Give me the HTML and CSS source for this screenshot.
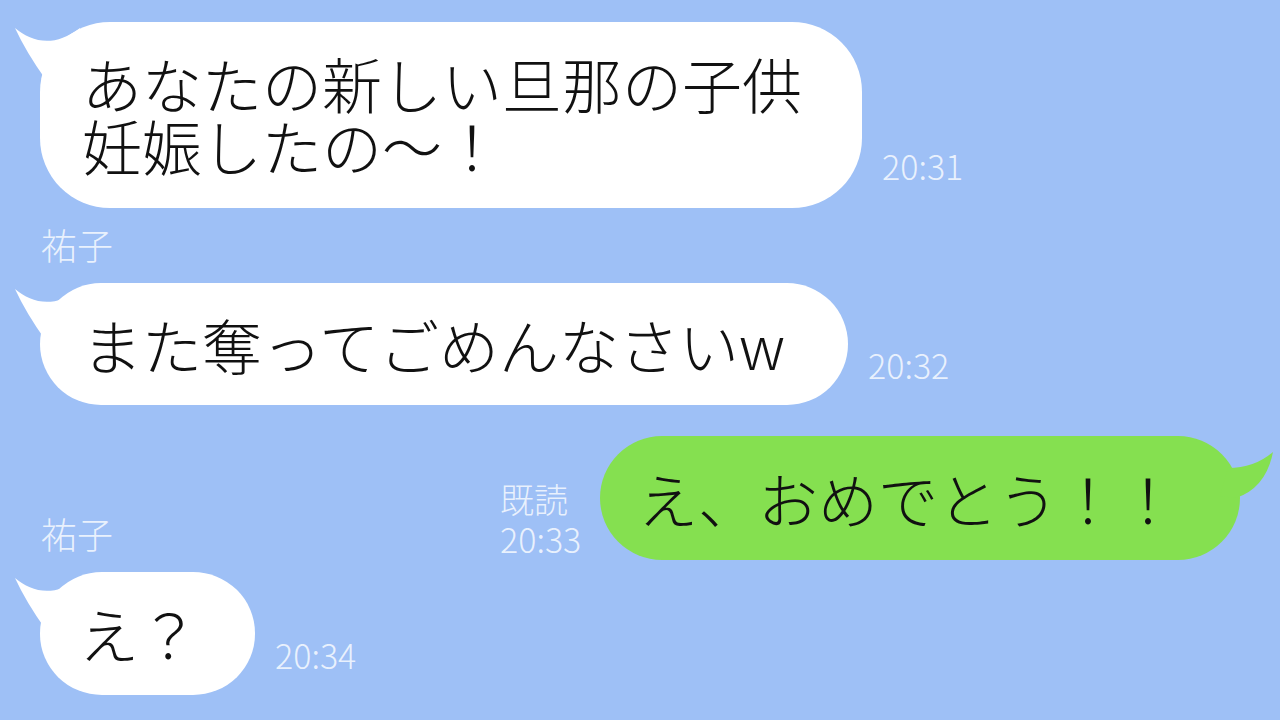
FILE: index.html
```html
<!DOCTYPE html>
<html lang="ja">
<head>
    <meta charset="UTF-8">
    <meta name="viewport" content="width=device-width, initial-scale=1.0">
    <title>トーク</title>
    <link rel="stylesheet" href="styles.css">
</head>
<body>
    <main class="chat">

      <div class="fila izq">
        <div class="burbuja blanca b1">
          <svg class="cola" viewBox="0 0 80 70" width="80" height="70"><path d="M5,6 C22,20 44,26 70,6 L90,50 L36,58 Q16,30 5,6 Z"/></svg>
          <span class="linea">あなたの新しい旦那の子供</span>
          <span class="linea">妊娠したの～！</span>
        </div>
        <span class="hora h1">20:31</span>
      </div>

      <p class="nombre n1">祐子</p>

      <div class="fila izq">
        <div class="burbuja blanca b2">
          <svg class="cola" viewBox="0 0 80 70" width="80" height="70"><path d="M5,6 C22,20 44,26 70,6 L90,50 L36,58 Q16,30 5,6 Z"/></svg>
          <span class="linea">また奪ってごめんなさいw</span>
        </div>
        <span class="hora h2">20:32</span>
      </div>

      <div class="fila der">
        <div class="leido">
          <span>既読</span>
          <span>20:33</span>
        </div>
        <div class="burbuja verde b3">
          <svg class="cola" viewBox="0 0 80 70" width="80" height="70"><path d="M73,16 Q55,32 28,32 L20,60 L36,62 Q66,52 73,16 Z"/></svg>
          <span class="linea">え、おめでとう！！</span>
        </div>
      </div>

      <p class="nombre n2">祐子</p>

      <div class="fila izq">
        <div class="burbuja blanca b4">
          <svg class="cola" viewBox="0 0 80 70" width="80" height="70"><path d="M5,6 C22,20 44,26 70,6 L90,50 L36,58 Q16,30 5,6 Z"/></svg>
          <span class="linea">え？</span>
        </div>
        <span class="hora h4">20:34</span>
      </div>

    </main>
</body>
</html>
```

FILE: styles.css
```css
* {
    margin: 0;
    padding: 0;
    box-sizing: border-box;
    font-family: "Noto Sans CJK JP", "Noto Sans", sans-serif;
}

body {
    width: 1280px;
    height: 720px;
    overflow: hidden;
    background-color: #9ec0f6;
}

.chat {
    display: flex;
    flex-direction: column;
    padding-top: 22px;
}

.fila {
    display: flex;
    align-items: flex-end;
}

.izq {
    padding-left: 40px;
    gap: 20px;
}

.der {
    justify-content: flex-end;
    padding-right: 40px;
    gap: 12px;
    margin-top: 31px;
}

.burbuja {
    position: relative;
    display: flex;
    flex-direction: column;
    gap: 2px;
    font-size: 60px;
    font-weight: 300;
    color: #111;
    white-space: nowrap;
}

/* cada linea con su propia caja para que no se pisen */
.linea {
    display: block;
    height: 60px;
    line-height: 60px;
}

.blanca {
    background-color: #fff;
    fill: #fff;

    .cola {
        position: absolute;
        left: -30px;
        top: 0;
    }
}

.verde {
    background-color: #85e050;
    fill: #85e050;

    .cola {
        position: absolute;
        right: -40px;
        top: 0;
    }
}

.b1 {
    width: 822px;
    padding: 31px 0 33px 42px;
    border-radius: 70px;
}

.b2 {
    width: 808px;
    padding: 31px 0 31px 42px;
    border-radius: 61px;
}

.b3 {
    width: 640px;
    padding: 32px 0 32px 38px;
    border-radius: 62px;
}

.b4 {
    width: 215px;
    height: 123px;
    padding: 31px 0 32px 39px;
    border-radius: 62px / 61px;
}

.hora, .leido span {
    font-size: 34px;
    line-height: 40px;
    font-weight: 300;
    color: rgba(255, 255, 255, 0.78);
}

.leido span {
    display: block;
    height: 40px;
}

.h1 {
    margin-bottom: 22px;
}

.h2, .h4 {
    margin-bottom: 20px;
}

.leido {
    display: flex;
    flex-direction: column;
    width: 88px;
    margin-bottom: 1px;
}

.nombre {
    font-size: 36px;
    line-height: 36px;
    padding-left: 41px;
    color: rgba(255, 255, 255, 0.78);
    font-weight: 300;
}

.n1 {
    margin: 18px 0 21px;
}

.n2 {
    margin: -45px 0 21px;
}
```
